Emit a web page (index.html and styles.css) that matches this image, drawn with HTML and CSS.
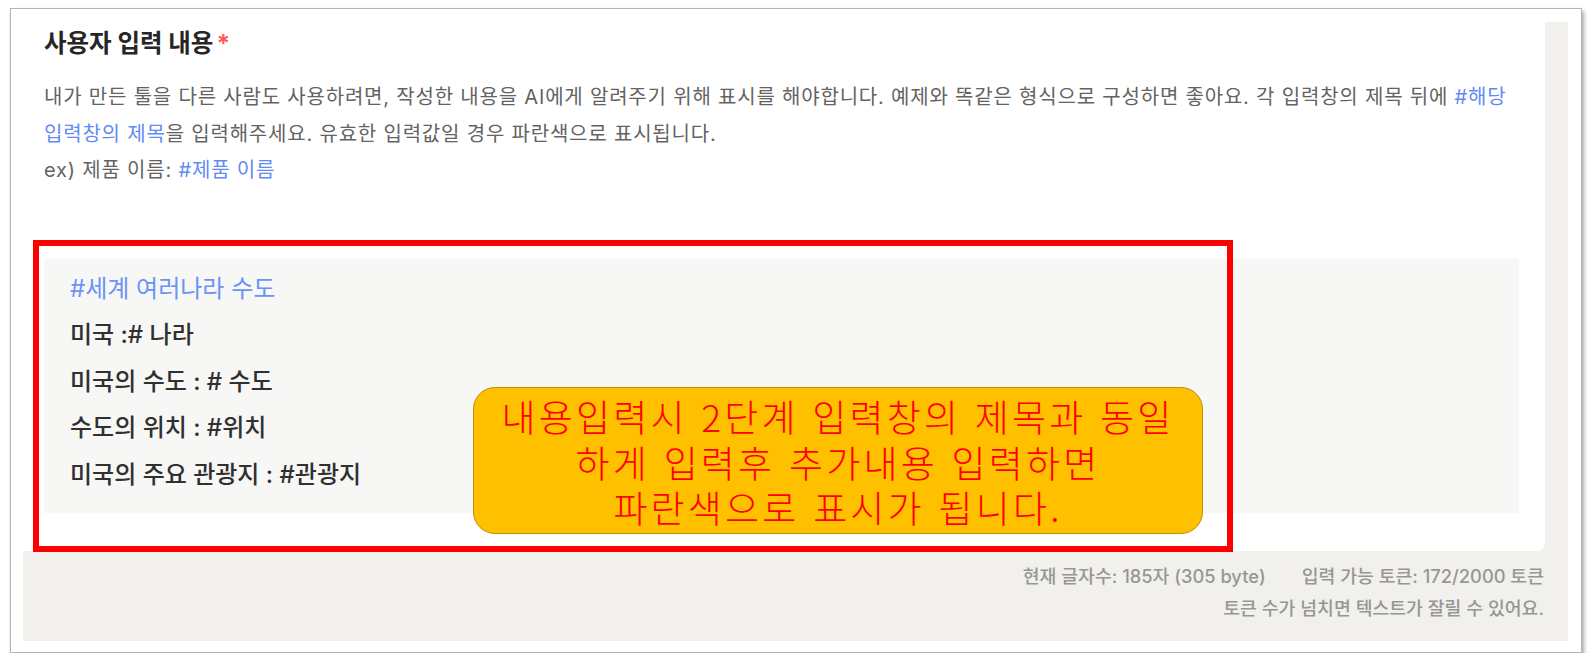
FILE: index.html
```html
<!DOCTYPE html>
<html lang="ko">
<head>
<meta charset="UTF-8">
<meta name="viewport" content="width=device-width, initial-scale=1.0">
<title>사용자 입력 내용</title>
<link rel="stylesheet" href="styles.css">
</head>
<body>

<div class="shot">
  <div class="panel">
    <div class="card">
      <div class="field-title">사용자 입력 내용<span class="req">*</span></div>
      <div class="field-desc">내가 만든 툴을 다른 사람도 사용하려면, 작성한 내용을 AI에게 알려주기 위해 표시를 해야합니다. 예제와 똑같은 형식으로 구성하면 좋아요. 각 입력창의 제목 뒤에 <span class="tag">#해당 입력창의 제목</span>을 입력해주세요. 유효한 입력값일 경우 파란색으로 표시됩니다.</div>
      <div class="field-desc">ex) 제품 이름: <span class="tag">#제품 이름</span></div>

      <div class="editor">
        <div class="tag">#세계 여러나라 수도</div>
        <div>미국 :# 나라</div>
        <div>미국의 수도 : # 수도</div>
        <div>수도의 위치 : #위치</div>
        <div>미국의 주요 관광지 : #관광지</div>
      </div>
    </div>

    <div class="footer">
      <div class="counts">
        <span>현재 글자수: 185자 (305 byte)</span>
        <span>입력 가능 토큰: 172/2000 토큰</span>
      </div>
      <div>토큰 수가 넘치면 텍스트가 잘릴 수 있어요.</div>
    </div>
  </div>

  <!-- annotation layer -->
  <div class="mark-box"></div>
  <div class="callout">내용입력시 2단계 입력창의 제목과 동일<br>하게 입력후 추가내용 입력하면<br>파란색으로 표시가 됩니다.</div>
</div>

</body>
</html>
```

FILE: styles.css
```css
body {
  margin: 0;
  padding: 0;
  background-color: #ffffff;
  font-family: Inter, "Noto Sans CJK KR", sans-serif;
}

.shot {
  position: relative;
  box-sizing: border-box;
  width: 1572px;
  height: 645px;
  margin: 8px 0 0 10px;
  padding: 13px 13px 11px 12px;
  border: 1px solid #b4b4b4;
  background-color: #ffffff;
  box-shadow: 2px 3px 4px rgba(0, 0, 0, 0.35);
  display: flex;
}

.panel {
  flex: 1;
  display: flex;
  flex-direction: column;
  background-color: #f1f0ec;
}

.card {
  flex: 1;
  margin-right: 23px;
  padding: 7px 26px 0 21px;
  background-color: #ffffff;
  border-radius: 0 0 8px 0;
}

.field-title {
  font-size: 24.5px;
  line-height: 28px;
  font-weight: 700;
  color: #262626;
}

.req {
  color: #ff5a5a;
  margin-left: 3px;
}

.field-title + .field-desc {
  margin-top: 22px;
}

.field-desc {
  font-size: 20px;
  line-height: 36.5px;
  letter-spacing: 0.8px;
  color: #636363;
}

.tag {
  color: #5f8bf6;
}

.editor {
  margin-top: 70px;
  padding: 7px 26px 15px;
  background-color: #f7f7f5;
  font-size: 24px;
  line-height: 46.5px;
  font-weight: 500;
  color: #303030;
}

.editor .tag {
  font-weight: 400;
  color: #6a93f7;
}

.footer {
  padding: 9px 24px 17px 0;
  text-align: right;
  font-size: 18.3px;
  line-height: 32px;
  font-weight: 500;
  color: #969696;
}

.counts {
  display: flex;
  justify-content: flex-end;
  gap: 36px;
}

/* red highlight frame drawn over the editor */
.mark-box {
  position: absolute;
  left: 22px;
  top: 231px;
  width: 1200px;
  height: 312px;
  box-sizing: border-box;
  border: 6px solid #ff0000;
}

.callout {
  position: absolute;
  left: 462px;
  top: 378px;
  width: 730px;
  height: 147px;
  box-sizing: border-box;
  padding-top: 6px;
  background-color: #ffc000;
  border: 1.5px solid #bf9000;
  border-radius: 22px;
  text-align: center;
  font-family: "Noto Sans CJK KR", sans-serif;
  font-size: 37px;
  font-weight: 300;
  line-height: 45.5px;
  letter-spacing: 3.2px;
  color: #ff0000;
}
```
